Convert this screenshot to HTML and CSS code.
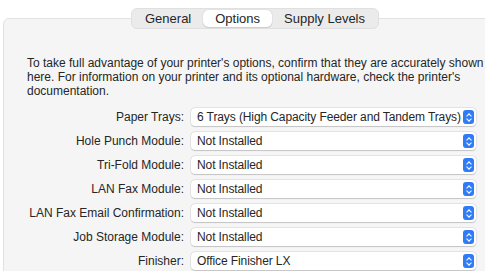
FILE: index.html
```html
<!DOCTYPE html>
<html lang="en">
<head>
    <meta charset="UTF-8">
    <title>Printer Options</title>
    <link rel="stylesheet" href="styles.css">
</head>
<body>

    <div class="tabs">
        <span class="tab">General</span>
        <span class="tab active">Options</span>
        <span class="tab">Supply Levels</span>
    </div>

    <div class="panel">
        <p class="intro">To take full advantage of your printer's options, confirm that they are accurately shown here. For information on your printer and its optional hardware, check the printer's documentation.</p>

        <div class="options">
            <label>Paper Trays:</label>
            <div class="select"><span>6 Trays (High Capacity Feeder and Tandem Trays)</span><i class="stepper"></i></div>

            <label>Hole Punch Module:</label>
            <div class="select"><span>Not Installed</span><i class="stepper"></i></div>

            <label>Tri-Fold Module:</label>
            <div class="select"><span>Not Installed</span><i class="stepper"></i></div>

            <label>LAN Fax Module:</label>
            <div class="select"><span>Not Installed</span><i class="stepper"></i></div>

            <label>LAN Fax Email Confirmation:</label>
            <div class="select"><span>Not Installed</span><i class="stepper"></i></div>

            <label>Job Storage Module:</label>
            <div class="select"><span>Not Installed</span><i class="stepper"></i></div>

            <label>Finisher:</label>
            <div class="select"><span>Office Finisher LX</span><i class="stepper"></i></div>
        </div>
    </div>

</body>
</html>
```

FILE: styles.css
```css
* {
    margin: 0;
    padding: 0;
    box-sizing: border-box;
}

body {
    font-family: "Liberation Sans", Arial, sans-serif;
    font-size: 12px;
    color: #262626;
    background: #fff;
    height: 271px;
    overflow: hidden;
    position: relative;
}

.tabs {
    position: absolute;
    top: 8px;
    left: 131px;
    z-index: 1;
    display: flex;
    height: 21px;
    padding: 1px;
    background: #ebebeb;
    border: 1px solid #e0e0e0;
    border-radius: 6px;
}

.tab {
    display: flex;
    align-items: center;
    justify-content: center;
    padding: 0 12px;
    font-size: 13px;
    border-radius: 5px;
}

.tab.active {
    background: #fff;
    box-shadow: 0 0 1px rgba(0, 0, 0, 0.3), 0 1px 1px rgba(0, 0, 0, 0.1);
}

.panel {
    margin: 18px -10px 0 3px;
    height: 260px;
    background: #f5f5f5;
    border: 1px solid #e2e2e2;
    border-radius: 6px;
    padding: 37px 0 0 23px;
}

.intro {
    width: 460px;
    line-height: 14px;
    margin-bottom: 10px;
}

.options {
    display: grid;
    grid-template-columns: 157px 285px;
    column-gap: 7px;
    row-gap: 6px;
    align-items: center;
}

.options label {
    text-align: right;
    white-space: nowrap;
}

.select {
    display: flex;
    align-items: center;
    justify-content: space-between;
    height: 18px;
    padding: 0 2px 0 6px;
    background: #fff;
    border-radius: 4px;
    box-shadow: 0 0 0 0.5px rgba(0, 0, 0, 0.12), 0 0.5px 1px rgba(0, 0, 0, 0.15);
    white-space: nowrap;
    letter-spacing: -0.1px;
}

.stepper {
    position: relative;
    width: 11px;
    height: 14px;
    background: #2f7cf6;
    border-radius: 3px;
}

.stepper::before,
.stepper::after {
    content: "";
    position: absolute;
    left: 3.5px;
    width: 3px;
    height: 3px;
    border-left: 1.2px solid #fff;
    border-top: 1.2px solid #fff;
}

.stepper::before {
    top: 3.5px;
    transform: rotate(45deg);
}

.stepper::after {
    bottom: 3.5px;
    transform: rotate(-135deg);
}
```
